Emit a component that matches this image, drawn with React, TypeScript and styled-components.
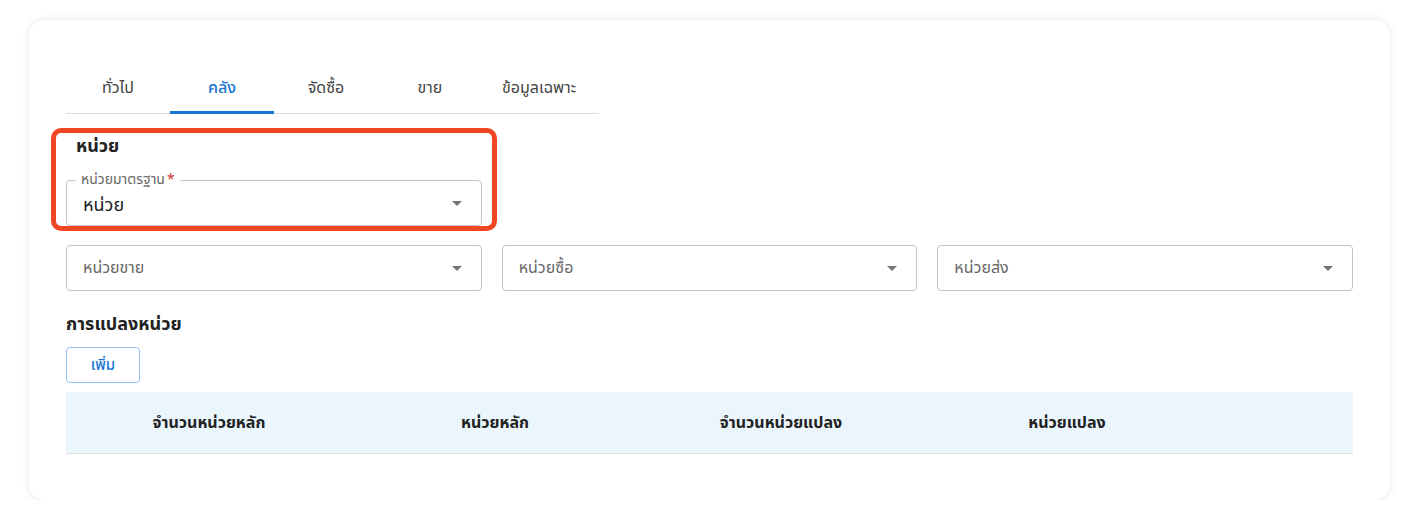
import * as React from 'react';
import styled, { createGlobalStyle } from 'styled-components';

const GlobalStyle = createGlobalStyle`
	body {
		margin: 0;
		background: #ffffff;
		font-family: 'Noto Sans Thai', 'Noto Sans', 'DejaVu Sans', sans-serif;
		color: #222222;
	}
`;

const Page = styled.div`
	padding: 20px 22px 0 29px;
`;

const Card = styled.div`
	background: #ffffff;
	border-radius: 16px;
	box-shadow: 0 0 9px rgba(0, 0, 0, 0.1);
	padding: 44px 37px 46px;
	box-sizing: border-box;
	height: 480px;
`;

const TabBar = styled.div`
	display: flex;
	width: 533px;
	border-bottom: 1px solid #dddddd;
`;

const Tab = styled.div<{ active?: boolean }>`
	position: relative;
	display: flex;
	align-items: center;
	justify-content: center;
	min-width: 104px;
	height: 49px;
	padding: 0 20px 2px;
	box-sizing: border-box;
	font-size: 16px;
	color: ${p => (p.active ? '#1976d2' : '#444444')};
	font-weight: ${p => (p.active ? 500 : 400)};

	&::after {
		content: '';
		display: ${p => (p.active ? 'block' : 'none')};
		position: absolute;
		left: 0;
		right: 0;
		bottom: -1px;
		height: 3px;
		background: #1976d2;
	}
`;

const Section = styled.div`
	position: relative;
	width: 416px;
	margin-top: 21px;
`;

// annotation frame drawn over the section
const Highlight = styled.div`
	position: absolute;
	left: -15px;
	right: -15px;
	top: -7px;
	bottom: -5px;
	border: 5px solid #ef4623;
	border-radius: 10px;
	pointer-events: none;
`;

const Heading = styled.div`
	font-size: 18px;
	font-weight: 700;
	line-height: 24px;
	color: #222222;
	padding-left: 10px;
`;

const SubHeading = styled(Heading)`
	padding-left: 0;
	margin-top: 22px;
`;

const Field = styled.div<{ hasLabel?: boolean }>`
	position: relative;
	display: flex;
	align-items: center;
	height: 46px;
	padding: 0 12px 0 16px;
	border: 1px solid #c4c4c4;
	border-radius: 4px;
	box-sizing: border-box;
	margin-top: ${p => (p.hasLabel ? '21px' : '0')};
`;

const FieldLabel = styled.span`
	position: absolute;
	left: 9px;
	top: -10px;
	padding: 0 5px;
	background: #ffffff;
	font-size: 14px;
	line-height: 18px;
	color: #666666;
`;

const Required = styled.span`
	color: #d32f2f;
	margin-left: 2px;
`;

const FieldValue = styled.span<{ placeholder?: boolean }>`
	flex: 1;
	font-size: ${p => (p.placeholder ? '16px' : '18px')};
	color: ${p => (p.placeholder ? '#666666' : '#222222')};
	padding-top: ${p => (p.placeholder ? '0' : '4px')};
`;

const Caret = styled.svg`
	width: 24px;
	height: 24px;
	fill: #757575;
	flex-shrink: 0;
`;

const FieldRow = styled.div`
	display: grid;
	grid-template-columns: repeat(3, 1fr);
	gap: 20px;
	margin-top: 19px;
`;

const AddButton = styled.button`
	display: block;
	width: 74px;
	height: 36px;
	margin-top: 10px;
	border: 1px solid #90c0f0;
	border-radius: 4px;
	background: #ffffff;
	color: #1976d2;
	font-family: inherit;
	font-size: 15px;
	font-weight: 500;
	cursor: pointer;
`;

const TableHead = styled.div`
	display: grid;
	grid-template-columns: 286px 286px 286px 286px 1fr;
	height: 62px;
	margin-top: 9px;
	background: #eaf5fc;
	border-bottom: 1px solid #dde3e8;
	box-sizing: border-box;
`;

const HeadCell = styled.div`
	display: flex;
	align-items: center;
	justify-content: center;
	font-size: 16px;
	font-weight: 700;
	color: #222222;
`;

const DropIcon = () => (
	<Caret viewBox="0 0 24 24">
		<path d="M7 10l5 5 5-5z" />
	</Caret>
);

const tabs = ['ทั่วไป', 'คลัง', 'จัดซื้อ', 'ขาย', 'ข้อมูลเฉพาะ'];
const units = ['หน่วยขาย', 'หน่วยซื้อ', 'หน่วยส่ง'];
const columns = ['จำนวนหน่วยหลัก', 'หน่วยหลัก', 'จำนวนหน่วยแปลง', 'หน่วยแปลง', ''];

export default function App() {
	return (
		<Page>
			<GlobalStyle />
			<Card>
				<TabBar>
					{tabs.map(t => (
						<Tab key={t} active={t === 'คลัง'}>
							{t}
						</Tab>
					))}
				</TabBar>

				<Section>
					<Heading>หน่วย</Heading>
					<Field hasLabel>
						<FieldLabel>
							หน่วยมาตรฐาน<Required>*</Required>
						</FieldLabel>
						<FieldValue>หน่วย</FieldValue>
						<DropIcon />
					</Field>
					<Highlight />
				</Section>

				<FieldRow>
					{units.map(u => (
						<Field key={u}>
							<FieldValue placeholder>{u}</FieldValue>
							<DropIcon />
						</Field>
					))}
				</FieldRow>

				<SubHeading>การแปลงหน่วย</SubHeading>
				<AddButton>เพิ่ม</AddButton>

				<TableHead>
					{columns.map((c, i) => (
						<HeadCell key={i}>{c}</HeadCell>
					))}
				</TableHead>
			</Card>
		</Page>
	);
}
